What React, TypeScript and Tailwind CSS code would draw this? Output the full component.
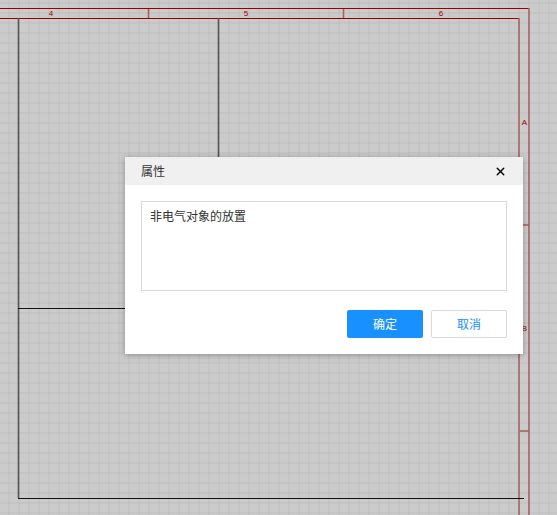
import { X } from 'lucide-react'

const W = 557
const H = 515

function Sheet() {
  const red = '#990000'
  const pink = '#a86262'
  return (
    <svg width={W} height={H} className="block">
      <defs>
        <pattern id="grid" width="10" height="10" patternUnits="userSpaceOnUse" x="-0.5" y="-6.5">
          <rect width="10" height="10" fill="#cbcbcb" />
          <path d="M 10 0 L 10 10 M 0 10 L 10 10" stroke="#b4b4b4" strokeWidth="1" fill="none" />
        </pattern>
      </defs>
      <rect width={W} height={H} fill="url(#grid)" />

      {/* frame */}
      <line x1="0" y1="8.5" x2="529" y2="8.5" stroke={red} />
      <line x1="0" y1="18.5" x2="519" y2="18.5" stroke={red} />
      <line x1="529" y1="8" x2="529" y2={H} stroke={pink} strokeWidth="1.6" />
      <line x1="519" y1="18" x2="519" y2={H} stroke={pink} strokeWidth="1.6" />
      <line x1="148.5" y1="9" x2="148.5" y2="18" stroke={pink} strokeWidth="1.6" />
      <line x1="343.5" y1="9" x2="343.5" y2="18" stroke={pink} strokeWidth="1.6" />
      <line x1="520" y1="225" x2="529" y2="225" stroke={pink} strokeWidth="1.6" />
      <line x1="520" y1="431" x2="529" y2="431" stroke={pink} strokeWidth="1.6" />

      <g fill={red} fontSize="8" fontFamily="'Liberation Sans', sans-serif" textAnchor="middle">
        <text x="51" y="16">4</text>
        <text x="246" y="16">5</text>
        <text x="441" y="16">6</text>
        <text x="524.5" y="125">A</text>
        <text x="524.5" y="331">B</text>
      </g>

      {/* drawing */}
      <line x1="18.5" y1="18" x2="18.5" y2="498" stroke="#555" strokeWidth="1.6" />
      <line x1="218.5" y1="18" x2="218.5" y2="308" stroke="#555" strokeWidth="1.6" />
      <line x1="18" y1="308.5" x2="219" y2="308.5" stroke="#111" />
      <line x1="18" y1="498.5" x2="524" y2="498.5" stroke="#111" />
    </svg>
  )
}

export default function App() {
  return (
    <div
      className="relative w-[557px] h-[515px] overflow-hidden bg-[#cbcbcb]"
      style={{ fontFamily: "'Noto Sans CJK SC', 'Liberation Sans', sans-serif" }}
    >
      <Sheet />

      {/* 属性 dialog */}
      <div className="absolute left-[125px] top-[157px] w-[398px] bg-white shadow-[0_1px_6px_rgba(0,0,0,0.3)]">
        <div className="flex items-center justify-between h-[28px] bg-[#f0f0f0] pl-4 pr-4">
          <span className="text-[12px] text-[#333]">属性</span>
          <X className="w-[13px] h-[13px] text-black" strokeWidth={2.5} />
        </div>
        <div className="p-4">
          <div className="h-[90px] border border-[#d9d9d9] px-2 py-1 text-[12px] leading-[19px] text-[#333]">
            非电气对象的放置
          </div>
          <div className="flex justify-end gap-2 mt-[19px]">
            <button className="w-[76px] h-[28px] rounded-[2px] bg-[#1890ff] text-white text-[12px]">
              确定
            </button>
            <button className="w-[76px] h-[28px] rounded-[2px] border border-[#d9d9d9] bg-white text-[#1890ff] text-[12px]">
              取消
            </button>
          </div>
        </div>
      </div>
    </div>
  )
}
